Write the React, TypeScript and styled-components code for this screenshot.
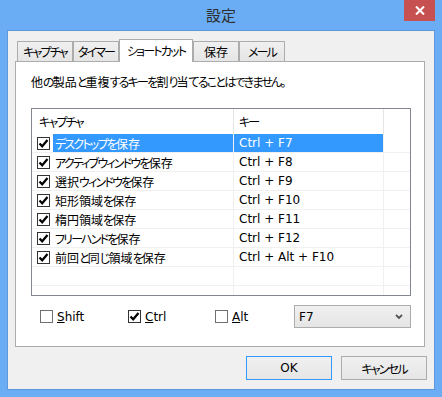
import React from 'react';
import styled, { createGlobalStyle } from 'styled-components';

const GlobalStyle = createGlobalStyle`
  html, body {
    margin: 0;
    padding: 0;
    background: #ffffff;
  }

  body {
    font-family: 'DejaVu Sans', 'Noto Sans CJK JP', sans-serif;
    font-size: 12px;
    font-feature-settings: 'palt';
    color: #000000;
  }
`;

type ShortcutRow = {
  label: string;
  keys: string;
  selected?: boolean;
};

const rows: ShortcutRow[] = [
  { label: 'デスクトップを保存', keys: 'Ctrl + F7', selected: true },
  { label: 'アクティブウィンドウを保存', keys: 'Ctrl + F8' },
  { label: '選択ウィンドウを保存', keys: 'Ctrl + F9' },
  { label: '矩形領域を保存', keys: 'Ctrl + F10' },
  { label: '楕円領域を保存', keys: 'Ctrl + F11' },
  { label: 'フリーハンドを保存', keys: 'Ctrl + F12' },
  { label: '前回と同じ領域を保存', keys: 'Ctrl + Alt + F10' },
];

const tabs = [
  { label: 'キャプチャ', width: 56 },
  { label: 'タイマー', width: 46 },
  { label: 'ショートカット', width: 74, active: true },
  { label: '保存', width: 46 },
  { label: 'メール', width: 46 },
];

// Meiryo UI draws kana much narrower than Noto, kanji about the same.
// Squeeze only the kana runs so the widths line up.
const Kana = styled.span`
  letter-spacing: -1.8px;
`;

const KANA_RUN = /([\u3000-\u30ff\uff00-\uffef]+)/;

const Jp: React.FC<{ children: string }> = ({ children }) => (
  <>
    {children.split(KANA_RUN).map((part, i) =>
      KANA_RUN.test(part) ? <Kana key={i}>{part}</Kana> : part
    )}
  </>
);

const CheckMark = () => (
  <svg width="11" height="11" viewBox="0 0 11 11">
    <path d="M1.5 5.5 L4.2 8.3 L9.5 2" fill="none" stroke="#000" strokeWidth="2.2" />
  </svg>
);

const CheckBox: React.FC<{ checked?: boolean }> = ({ checked }) => (
  <Box $checked={checked}>{checked && <CheckMark />}</Box>
);

export default function App() {
  return (
    <>
      <GlobalStyle />
      <Window>
        <TitleBar>
          <span />
          <Title>設定</Title>
          <CloseButton>
            <svg width="10" height="9" viewBox="0 0 10 9">
              <path d="M1 0.5 L9 8.5 M9 0.5 L1 8.5" stroke="#fff" strokeWidth="2" />
            </svg>
          </CloseButton>
        </TitleBar>

        <Client>
          <TabStrip>
            {tabs.map((tab) => (
              <Tab key={tab.label} $active={tab.active} $width={tab.width}>
                <Jp>{tab.label}</Jp>
              </Tab>
            ))}
          </TabStrip>

          <Panel>
            <Notice>
              <Jp>他の製品と重複するキーを割り当てることはできません。</Jp>
            </Notice>

            <ListBox>
              <HeaderRow>
                <HeaderCell $pad={7}>
                  <Jp>キャプチャ</Jp>
                </HeaderCell>
                <HeaderCell $pad={5}>
                  <Jp>キー</Jp>
                </HeaderCell>
                <HeaderCell $pad={0} />
              </HeaderRow>
              {rows.map((row) => (
                <Row key={row.label}>
                  <NameCell>
                    <CheckBox checked />
                    <NameLabel $selected={row.selected}>
                      <Jp>{row.label}</Jp>
                    </NameLabel>
                  </NameCell>
                  <KeyCell $selected={row.selected}>{row.keys}</KeyCell>
                  <FillCell />
                </Row>
              ))}
              {[0, 1].map((i) => (
                <Row key={`empty-${i}`}>
                  <NameCell />
                  <KeyCell />
                  <FillCell />
                </Row>
              ))}
            </ListBox>

            <Modifiers>
              <Modifier>
                <CheckBox />
                <span>
                  <u>S</u>hift
                </span>
              </Modifier>
              <Modifier>
                <CheckBox checked />
                <span>
                  <u>C</u>trl
                </span>
              </Modifier>
              <Modifier>
                <CheckBox />
                <span>
                  <u>A</u>lt
                </span>
              </Modifier>
              <Combo>
                <span>F7</span>
                <svg width="8" height="6" viewBox="0 0 8 6">
                  <path d="M1 1 L4 4 L7 1" fill="none" stroke="#555" strokeWidth="1.8" />
                </svg>
              </Combo>
            </Modifiers>
          </Panel>

          <Buttons>
            <Button $default>OK</Button>
            <Button>
              <Jp>キャンセル</Jp>
            </Button>
          </Buttons>
        </Client>
      </Window>
    </>
  );
}

const Window = styled.div`
  width: 442px;
  height: 397px;
  box-sizing: border-box;
  background: #6badf4;
  display: flex;
  flex-direction: column;
`;

const TitleBar = styled.div`
  height: 30px;
  display: grid;
  grid-template-columns: 1fr auto 1fr;
  align-items: start;
`;

const Title = styled.div`
  font-size: 15px;
  line-height: 30px;
  color: #2e2e2e;
  font-family: 'Noto Sans CJK JP', sans-serif;
`;

const CloseButton = styled.div`
  justify-self: end;
  margin-right: 7px;
  width: 31px;
  height: 21px;
  background: #c75050;
  display: flex;
  align-items: center;
  justify-content: center;
`;

const Client = styled.div`
  flex: 1;
  margin: 0 7px 7px;
  border: 1px solid #5e98dc;
  background: #f0f0f0;
  padding: 8px 9px 0 7px;
  display: flex;
  flex-direction: column;
`;

const TabStrip = styled.div`
  display: flex;
  align-items: flex-end;
  margin-left: 2px;
  margin-bottom: -1px;
  position: relative;
  z-index: 1;
`;

const Tab = styled.div<{ $active?: boolean; $width: number }>`
  box-sizing: border-box;
  width: ${(p) => p.$width}px;
  height: ${(p) => (p.$active ? 23 : 20)}px;
  margin-bottom: ${(p) => (p.$active ? 0 : 1)}px;
  border: 1px solid #acacac;
  border-bottom: none;
  background: ${(p) => (p.$active ? '#ffffff' : 'linear-gradient(#f0f0f0, #e5e5e5)')};
  display: flex;
  align-items: center;
  justify-content: center;
  padding-bottom: ${(p) => (p.$active ? 2 : 0)}px;
  white-space: nowrap;
`;

const Panel = styled.div`
  box-sizing: border-box;
  height: 286px;
  background: #ffffff;
  border: 1px solid #acacac;
  padding: 12px 13px 0 15px;
  display: flex;
  flex-direction: column;
`;

const Notice = styled.div`
  line-height: 18px;
`;

const ListBox = styled.div`
  box-sizing: border-box;
  margin-top: 16px;
  width: 380px;
  height: 188px;
  border: 1px solid #828790;
  background: #ffffff;
  overflow: hidden;
`;

const HeaderRow = styled.div`
  display: grid;
  grid-template-columns: 202px 150px 1fr;
  height: 25px;
`;

const HeaderCell = styled.div<{ $pad: number }>`
  border-right: 1px solid #e5e5e5;
  padding-left: ${(p) => p.$pad}px;
  display: flex;
  align-items: center;
  padding-bottom: 1px;

  &:last-child {
    border-right: none;
  }
`;

const Row = styled.div`
  display: grid;
  grid-template-columns: 202px 150px 1fr;
  height: 19px;
  box-sizing: border-box;
  border-bottom: 1px solid #f0f0f0;
`;

const NameCell = styled.div`
  display: flex;
  align-items: center;
  padding-left: 5px;
  border-right: 1px solid #f0f0f0;
  gap: 3px;
`;

const NameLabel = styled.div<{ $selected?: boolean }>`
  flex: 1;
  align-self: stretch;
  display: flex;
  align-items: center;
  padding-left: 2px;
  white-space: nowrap;
  background: ${(p) => (p.$selected ? '#3399ff' : 'transparent')};
  color: ${(p) => (p.$selected ? '#ffffff' : '#000000')};
`;

const KeyCell = styled.div<{ $selected?: boolean }>`
  display: flex;
  align-items: center;
  padding-left: 5px;
  border-right: 1px solid #f0f0f0;
  white-space: nowrap;
  background: ${(p) => (p.$selected ? '#3399ff' : 'transparent')};
  color: ${(p) => (p.$selected ? '#ffffff' : '#000000')};
`;

const FillCell = styled.div``;

const Box = styled.span<{ $checked?: boolean }>`
  box-sizing: border-box;
  width: 13px;
  height: 13px;
  flex: none;
  border: 1px solid ${(p) => (p.$checked ? '#333333' : '#707070')};
  background: #ffffff;
  display: inline-flex;
  align-items: center;
  justify-content: center;
`;

const Modifiers = styled.div`
  margin-top: 9px;
  padding-left: 9px;
  display: grid;
  grid-template-columns: 88px 87px 79px 117px;
  align-items: center;
  height: 23px;
`;

const Modifier = styled.label`
  display: flex;
  align-items: center;
  gap: 4px;
`;

const Combo = styled.div`
  box-sizing: border-box;
  height: 23px;
  border: 1px solid #acacac;
  background: linear-gradient(#f0f0f0, #e5e5e5);
  display: flex;
  align-items: center;
  justify-content: space-between;
  padding: 0 7px 0 4px;
`;

const Buttons = styled.div`
  display: flex;
  justify-content: flex-end;
  gap: 9px;
  margin-top: 9px;
  margin-right: -2px;
`;

const Button = styled.div<{ $default?: boolean }>`
  box-sizing: border-box;
  width: 86px;
  height: 24px;
  border: 1px solid ${(p) => (p.$default ? '#3399ff' : '#acacac')};
  background: linear-gradient(#f0f0f0, #e5e5e5);
  display: flex;
  align-items: center;
  justify-content: center;
`;
